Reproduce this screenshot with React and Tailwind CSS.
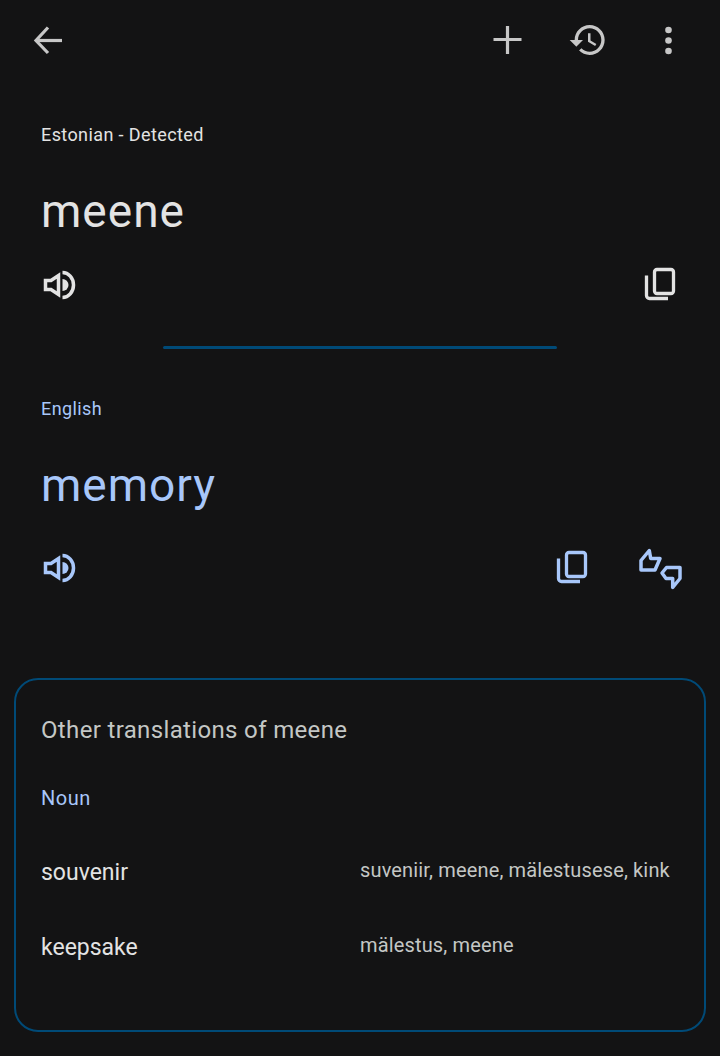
import React from 'react';

const font = { fontFamily: 'Roboto, "Noto Sans", sans-serif' };

const ArrowIcon = () => (
  <svg width="40" height="40" viewBox="0 0 40 40" fill="none" stroke="currentColor" strokeWidth="3.2">
    <path d="M34 20.500H8" />
    <path d="M20 7.500L8 20.500 20 33" />
  </svg>
);

const PlusIcon = () => (
  <svg width="40" height="40" viewBox="0 0 40 40" fill="none" stroke="currentColor" strokeWidth="3.2">
    <path d="M19.500 6v28M5.500 19.500h28" />
  </svg>
);

const HistoryIcon = () => (
  <svg width="44" height="44" viewBox="0 0 24 24" fill="currentColor">
    <path d="M13 3c-4.97 0-9 4.03-9 9H1l3.89 3.89.07.14L9 12H6c0-3.87 3.13-7 7-7s7 3.13 7 7-3.13 7-7 7c-1.93 0-3.68-.79-4.94-2.06l-1.42 1.42C8.27 19.99 10.51 21 13 21c4.97 0 9-4.03 9-9s-4.03-9-9-9zm-1 5v5l4.28 2.54.72-1.21-3.5-2.08V8H12z" />
  </svg>
);

const DotsIcon = () => (
  <svg width="40" height="40" viewBox="0 0 40 40" fill="currentColor">
    <circle cx="20.500" cy="10" r="3.300" />
    <circle cx="20.500" cy="20.500" r="3.300" />
    <circle cx="20.500" cy="31" r="3.300" />
  </svg>
);

const SpeakerIcon = () => (
  <svg width="40" height="40" viewBox="0 0 40 40" fill="none" stroke="currentColor" strokeWidth="3.500">
    <path d="M6.500 15.500H12l7.500-5v19l-7.500-5H6.500z" />
    <path d="M23.500 14a6 6 0 0 1 0 12z" fill="currentColor" stroke="none" />
    <path d="M23.500 7.500a11 12.500 0 0 1 0 25" />
  </svg>
);

const CopyIcon = () => (
  <svg width="40" height="40" viewBox="0 0 40 40" fill="none" stroke="currentColor" strokeWidth="3.300">
    <rect x="14.500" y="4.500" width="19" height="24" rx="2.500" />
    <path d="M6.500 10.500v20a3 3 0 0 0 3 3H28" />
  </svg>
);

const FeedbackIcon = () => (
  <svg width="44" height="44" viewBox="0 0 44 44" fill="none" stroke="currentColor" strokeWidth="3.500" strokeLinejoin="round">
    <path d="M3 24V14.500L11.300 4.500l1.400 8H22L17 24z" />
    <path d="M28.500 21.500H42V32.500L34.700 41.500V32.500H28L24 27z" />
  </svg>
);

const App = () => {
  return (
    <div className="w-[720px] h-[1056px] overflow-hidden bg-[#131314] flex flex-col" style={font}>
      <div className="h-20 pl-[28px] pr-[32px] flex items-center justify-between text-[#c7c7c7]">
        <ArrowIcon />
        <div className="flex items-center gap-[40px]">
          <PlusIcon />
          <div className="w-10 h-10 flex items-center justify-center"><HistoryIcon /></div>
          <DotsIcon />
        </div>
      </div>

      <div className="px-[41px] pt-[43px]">
        <p className="text-[18px] leading-6 tracking-[0.4px] text-[#e3e3e3]">Estonian - Detected</p>
        <p className="mt-[36px] text-[46px] leading-[56px] tracking-[1px] text-[#e3e3e3]">meene</p>
      </div>
      <div className="pl-[39px] pr-[40px] mt-[26px] flex justify-between text-[#e3e3e3]">
        <SpeakerIcon />
        <CopyIcon />
      </div>

      <div className="mt-[41px] mx-auto w-[394px] h-[3px] rounded-full bg-[#004a77]"></div>

      <div className="px-[41px] pt-[48px]">
        <p className="text-[18px] leading-6 tracking-[0.4px] text-[#a8c7fa]">English</p>
        <p className="mt-[36px] text-[46px] leading-[56px] tracking-[1px] text-[#a8c7fa]">memory</p>
      </div>
      <div className="pl-[39px] pr-[38px] mt-[35px] h-10 flex justify-between items-center text-[#a8c7fa]">
        <SpeakerIcon />
        <div className="flex items-center gap-[46px]">
          <CopyIcon />
          <FeedbackIcon />
        </div>
      </div>

      <div className="mt-[90px] mx-[14px] h-[354px] rounded-[24px] border-2 border-[#004a77] px-[25px] pt-[34px]">
        <p className="text-[24px] leading-8 tracking-[0.35px] text-[#c4c7c5]">Other translations of meene</p>
        <p className="mt-[38px] text-[20px] leading-7 tracking-[0.5px] text-[#a8c7fa]">Noun</p>
        <div className="mt-[44px] flex items-start">
          <p className="w-[319px] pt-px text-[23px] leading-8 text-[#e3e3e3]">souvenir</p>
          <p className="text-[20px] leading-7 tracking-[0.15px] text-[#c4c7c5]">suveniir, meene, mälestusese, kink</p>
        </div>
        <div className="mt-[42px] flex items-start">
          <p className="w-[319px] pt-px text-[23px] leading-8 text-[#e3e3e3]">keepsake</p>
          <p className="text-[20px] leading-7 tracking-[0.15px] text-[#c4c7c5]">mälestus, meene</p>
        </div>
      </div>
    </div>
  );
};

export default App;
